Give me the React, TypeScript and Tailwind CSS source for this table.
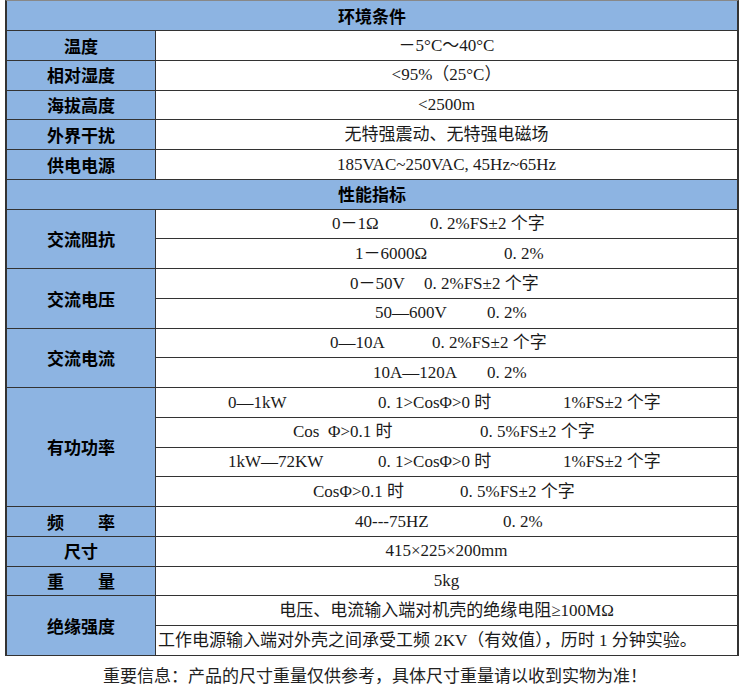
import React from "react";

const ROW = "h-[29.76px]";
const valFont = "font-['Liberation_Serif','Noto_Sans_CJK_SC',serif] text-[17px] text-[#1a1a1a]";
const labelFont = "font-['Noto_Sans_CJK_SC',sans-serif] font-bold text-[17px] text-black";

type Cell = { pl?: number; parts: Array<{ text: string; w?: number }> } | string;

function Value({ cell }: { cell: Cell }) {
  if (typeof cell === "string") {
    return (
      <div className={`${ROW} border-b border-[#333] flex items-center justify-center whitespace-pre ${valFont}`}>{cell}</div>
    );
  }
  return (
    <div className={`${ROW} border-b border-[#333] flex items-center whitespace-pre ${valFont}`} style={{ paddingLeft: cell.pl }}>
      {cell.parts.map((p, i) => (
        <span key={i} className="shrink-0" style={p.w ? { width: p.w } : undefined}>{p.text}</span>
      ))}
    </div>
  );
}

function Group({ label, values }: { label: string; values: Cell[] }) {
  return (
    <div className="flex">
      <div className={`w-[149px] shrink-0 border-r border-b border-[#333] bg-[#8db4e2] flex items-center justify-center whitespace-pre ${labelFont}`}>
        {label}
      </div>
      <div className="flex-1 flex flex-col bg-white">
        {values.map((v, i) => (
          <Value key={i} cell={v} />
        ))}
      </div>
    </div>
  );
}

function Header({ title, top }: { title: string; top?: boolean }) {
  return (
    <div className={`${top ? "h-[30px]" : ROW} border-b border-[#333] bg-[#8db4e2] flex items-center justify-center ${labelFont}`}>
      {title}
    </div>
  );
}

const pf = "0. 2%FS±2 个字";

export default function App() {
  return (
    <div className="w-[750px] h-[687px] bg-white">
      <div className="ml-[5px] w-[734px] border-t border-t-[#888] border-l-2 border-r-2 border-[#333]">
        <Header title="环境条件" top />
        <Group label="温度" values={["－5°C～40°C"]} />
        <Group label="相对湿度" values={["<95%（25°C）"]} />
        <Group label="海拔高度" values={["<2500m"]} />
        <Group label="外界干扰" values={["无特强震动、无特强电磁场"]} />
        <Group label="供电电源" values={["185VAC~250VAC, 45Hz~65Hz"]} />
        <Header title="性能指标" />
        <Group
          label="交流阻抗"
          values={[
            { pl: 176, parts: [{ text: "0－1Ω", w: 98 }, { text: pf }] },
            { pl: 199, parts: [{ text: "1－6000Ω", w: 149 }, { text: "0. 2%" }] },
          ]}
        />
        <Group
          label="交流电压"
          values={[
            { pl: 194, parts: [{ text: "0－50V", w: 74 }, { text: pf }] },
            { pl: 219, parts: [{ text: "50—600V", w: 112 }, { text: "0. 2%" }] },
          ]}
        />
        <Group
          label="交流电流"
          values={[
            { pl: 174, parts: [{ text: "0—10A", w: 102 }, { text: pf }] },
            { pl: 217, parts: [{ text: "10A—120A", w: 114 }, { text: "0. 2%" }] },
          ]}
        />
        <Group
          label="有功功率"
          values={[
            { pl: 72, parts: [{ text: "0—1kW", w: 150 }, { text: "0. 1>CosΦ>0 时", w: 185 }, { text: "1%FS±2 个字" }] },
            { pl: 137, parts: [{ text: "Cos  Φ>0.1 时", w: 187 }, { text: "0. 5%FS±2 个字" }] },
            { pl: 72, parts: [{ text: "1kW—72KW", w: 150 }, { text: "0. 1>CosΦ>0 时", w: 185 }, { text: "1%FS±2 个字" }] },
            { pl: 157, parts: [{ text: "CosΦ>0.1 时", w: 147 }, { text: "0. 5%FS±2 个字" }] },
          ]}
        />
        <Group label={"频\u3000\u3000率"} values={[{ pl: 199, parts: [{ text: "40---75HZ", w: 148 }, { text: "0. 2%" }] }]} />
        <Group label="尺寸" values={["415×225×200mm"]} />
        <Group label={"重\u3000\u3000量"} values={["5kg"]} />
        <Group
          label="绝缘强度"
          values={[
            "电压、电流输入端对机壳的绝缘电阻≥100MΩ",
            { pl: 2, parts: [{ text: "工作电源输入端对外壳之间承受工频 2KV（有效值），历时 1 分钟实验。" }] },
          ]}
        />
      </div>
      <p className="pt-[6px] text-center font-['Noto_Sans_CJK_SC',sans-serif] text-[17px] text-[#222]">
        重要信息：产品的尺寸重量仅供参考，具体尺寸重量请以收到实物为准！
      </p>
    </div>
  );
}
